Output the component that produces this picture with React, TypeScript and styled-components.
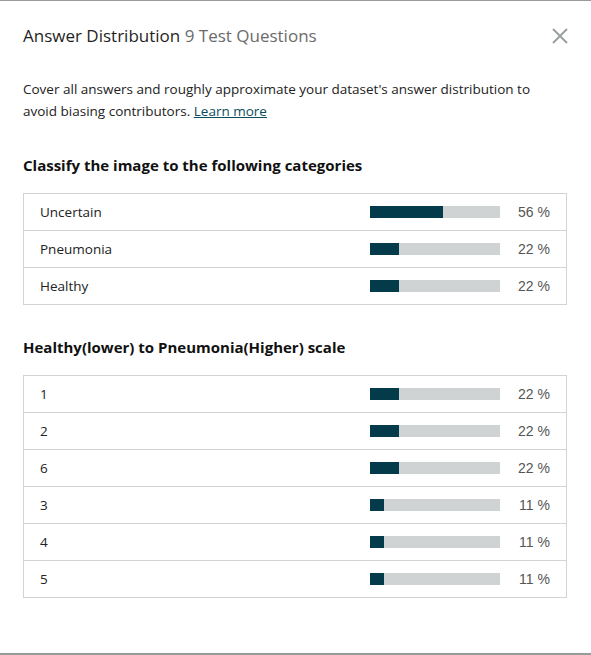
import styled, { createGlobalStyle } from "styled-components";

// global
const GlobalStyle = createGlobalStyle`
  html, body {
    margin: 0;
    padding: 0;
    background: #ffffff;
  }
  body {
    font-family: "Open Sans", "Noto Sans", sans-serif;
    color: #222;
  }
`;

// styled
const Modal = styled.div`
  box-sizing: border-box;
  width: 591px;
  height: 655px;
  border-top: 1px solid #9a9a9a;
  border-bottom: 2px solid #9a9a9a;
  padding: 0 24px 0 23px;
`;

const Header = styled.div`
  display: flex;
  align-items: center;
  justify-content: space-between;
  height: 69px;
`;

const Title = styled.h2`
  margin: 0;
  font-size: 17px;
  font-weight: 400;
  color: #1f1f1f;
`;

const Muted = styled.span`
  color: #6b6b6b;
`;

const CloseBtn = styled.button`
  display: flex;
  padding: 0;
  border: none;
  background: none;
  cursor: pointer;
  margin-right: -2px;
`;

const Intro = styled.p`
  margin: 8px 0 0;
  font-size: 13.5px;
  line-height: 22px;
  color: #222;
`;

const LearnMore = styled.a`
  color: #0b4d5e;
  text-decoration: underline;
`;

const SectionTitle = styled.h3<{ $gap: number }>`
  margin: ${(p) => p.$gap}px 0 18px;
  font-size: 15px;
  font-weight: 700;
  color: #111;
`;

const Table = styled.div`
  border: 1px solid #d3d3d3;
`;

const Row = styled.div`
  display: flex;
  align-items: center;
  height: 36px;
  padding: 0 16px;
  & + & {
    border-top: 1px solid #d3d3d3;
  }
`;

const Label = styled.span`
  flex: 1;
  font-size: 13.5px;
  color: #222;
`;

const Track = styled.div`
  width: 130px;
  height: 12px;
  background: #d0d3d3;
`;

const Fill = styled.div`
  height: 100%;
  background: #033b4a;
`;

const Pct = styled.span`
  width: 50px;
  text-align: right;
  font-family: "Liberation Sans", Arial, sans-serif;
  font-size: 14px;
  color: #555;
`;

// data
interface Answer {
  label: string;
  pct: number;
}

const categories: Answer[] = [
  { label: "Uncertain", pct: 56 },
  { label: "Pneumonia", pct: 22 },
  { label: "Healthy", pct: 22 },
];

const scale: Answer[] = [
  { label: "1", pct: 22 },
  { label: "2", pct: 22 },
  { label: "6", pct: 22 },
  { label: "3", pct: 11 },
  { label: "4", pct: 11 },
  { label: "5", pct: 11 },
];

const AnswerTable: React.FC<{ rows: Answer[] }> = ({ rows }) => (
  <Table>
    {rows.map((r) => (
      <Row key={r.label}>
        <Label>{r.label}</Label>
        <Track>
          <Fill style={{ width: `${r.pct}%` }} />
        </Track>
        <Pct>{r.pct} %</Pct>
      </Row>
    ))}
  </Table>
);

// Main
const App: React.FC = () => (
  <>
    <GlobalStyle />
    <Modal>
      <Header>
        <Title>
          Answer Distribution <Muted>9 Test Questions</Muted>
        </Title>
        <CloseBtn aria-label="Close">
          <svg width="18" height="18" viewBox="0 0 18 18">
            <path
              d="M2 2 L16 16 M16 2 L2 16"
              stroke="#9aa0a2"
              strokeWidth="2"
              fill="none"
            />
          </svg>
        </CloseBtn>
      </Header>

      <Intro>
        Cover all answers and roughly approximate your dataset's answer
        distribution to avoid biasing contributors.{" "}
        <LearnMore href="#">Learn more</LearnMore>
      </Intro>

      <SectionTitle $gap={33}>
        Classify the image to the following categories
      </SectionTitle>
      <AnswerTable rows={categories} />

      <SectionTitle $gap={32}>
        Healthy(lower) to Pneumonia(Higher) scale
      </SectionTitle>
      <AnswerTable rows={scale} />
    </Modal>
  </>
);

export default App;
